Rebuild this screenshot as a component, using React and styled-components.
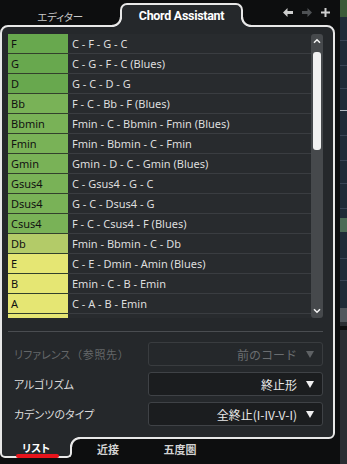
import React from "react";
import styled, { createGlobalStyle } from "styled-components";

const BG = "#0d0e0f";
const PANEL = "#25282b";
const CELL = "#282b2e";
const EDGE = "#e8e8e8";

const GlobalStyle = createGlobalStyle`
  html, body { margin: 0; padding: 0; background: ${BG}; }
  body { font-family: "Noto Sans", "Noto Sans CJK JP", sans-serif; }
  * { box-sizing: border-box; }
`;

const Screen = styled.div`
  display: flex;
  width: 347px;
  height: 464px;
  overflow: hidden;
  background: ${BG};
`;

const Main = styled.div`
  width: 335px;
  flex-shrink: 0;
  display: flex;
  flex-direction: column;
`;

const TopBar = styled.div`
  position: relative;
  z-index: 2;
  height: 25px;
  display: flex;
  align-items: flex-start;
`;

const InactiveTopTab = styled.div`
  width: 120px;
  height: 25px;
  padding-top: 7px;
  display: flex;
  align-items: center;
  justify-content: center;
  color: #c9c9c9;
  font-family: "Noto Sans CJK JP", sans-serif;
  font-feature-settings: "palt";
  font-size: 10.5px;
  letter-spacing: -0.2px;
`;

const corner = (side) => `
  content: "";
  position: absolute;
  bottom: 0;
  ${side}: -10px;
  width: 10px;
  height: 10px;
  background: radial-gradient(circle at ${side === "left" ? "0 0" : "100% 0"},
    ${BG} 7.3px, ${EDGE} 8.2px, ${EDGE} 9.6px, ${PANEL} 10.4px);
`;

const ActiveTopTab = styled.div`
  position: relative;
  margin-top: 3px;
  width: 123px;
  height: 24px;
  border: 2px solid ${EDGE};
  border-bottom: none;
  border-radius: 7px 7px 0 0;
  background: ${PANEL};
  display: flex;
  align-items: center;
  justify-content: center;
  padding-bottom: 2px;
  color: #ffffff;
  font-family: Roboto, "Noto Sans", sans-serif;
  font-weight: 700;
  font-size: 12.5px;
  letter-spacing: -0.3px;
  &::before { ${corner("left")} }
  &::after { ${corner("right")} }
`;

const TopIcons = styled.div`
  margin-left: auto;
  height: 25px;
  padding-right: 5px;
  display: flex;
  align-items: center;
  gap: 9px;
`;

const Panel = styled.div`
  height: 414px;
  border: 2px solid ${EDGE};
  border-radius: 8px 8px 6px 0;
  background: ${PANEL};
  padding: 7px 10px 11px 6px;
  display: flex;
  flex-direction: column;
`;

const List = styled.div`
  height: 284px;
  flex-shrink: 0;
  display: flex;
`;

const Rows = styled.div`
  flex: 1;
  overflow: hidden;
  display: flex;
  flex-direction: column;
`;

const Row = styled.div`
  display: grid;
  grid-template-columns: 60px 1fr;
  height: 20px;
  flex-shrink: 0;
  font-size: 11px;
  font-family: "Noto Sans", sans-serif;
`;

const ChordCell = styled.div`
  background: ${(p) => p.$color};
  color: #111;
  padding-left: 3px;
  display: flex;
  align-items: center;
  border-bottom: 1px solid #32402c;
`;

const ProgCell = styled.div`
  background: ${CELL};
  color: #dedede;
  padding-left: 4px;
  display: flex;
  align-items: center;
  white-space: nowrap;
  border-bottom: 1px solid #3a3d41;
`;

const Scrollbar = styled.div`
  width: 12px;
  flex-shrink: 0;
  background: #46494c;
  border-radius: 3px;
  display: flex;
  flex-direction: column;
  align-items: center;
`;

const ScrollArrow = styled.div`
  height: 14px;
  display: flex;
  align-items: center;
  justify-content: center;
`;

const ScrollTrack = styled.div`
  flex: 1;
  width: 100%;
  padding-top: 4px;
  display: flex;
  justify-content: center;
`;

const Thumb = styled.div`
  width: 8px;
  height: 98px;
  background: #f1f1f1;
  border-radius: 3px;
`;

const Divider = styled.div`
  height: 1px;
  flex-shrink: 0;
  margin-top: 13px;
  background: #4a4d51;
`;

const Settings = styled.div`
  margin-top: 10px;
  display: grid;
  grid-template-columns: 140px 175px;
  grid-auto-rows: 24px;
  row-gap: 6px;
`;

const Label = styled.div`
  padding-left: 6px;
  display: flex;
  align-items: center;
  white-space: nowrap;
  font-family: "Noto Sans CJK JP", sans-serif;
  font-feature-settings: "palt";
  font-size: 11px;
  color: ${(p) => (p.$disabled ? "#646769" : "#dadada")};
`;

const FullWidth = styled.span`
  font-feature-settings: "palt" 0;
  margin-left: 1px;
  letter-spacing: 0.6px;
`;

const Select = styled.div`
  border: 1px solid ${(p) => (p.$disabled ? "#393c3f" : "#3f4246")};
  background: ${(p) => (p.$disabled ? "transparent" : "#1b1d1f")};
  border-radius: 3px;
  display: flex;
  align-items: center;
  justify-content: flex-end;
  gap: 9px;
  padding-right: 8px;
  font-family: "Noto Sans CJK JP", sans-serif;
  font-size: 12px;
  color: ${(p) => (p.$disabled ? "#6a6d70" : "#e8e8e8")};
`;

const BottomTabs = styled.div`
  height: 19px;
  display: flex;
  font-family: "Noto Sans CJK JP", sans-serif;
  font-feature-settings: "palt";
  font-weight: 700;
  font-size: 11px;
`;

const ActiveBottomTab = styled.div`
  position: relative;
  width: 72px;
  height: 21px;
  margin-top: -2px;
  padding-top: 2px;
  border: 2px solid ${EDGE};
  border-top: none;
  border-radius: 0 0 5px 5px;
  background: ${PANEL};
  display: flex;
  align-items: center;
  justify-content: center;
  color: #ffffff;
  font-size: 10.5px;
  &::before {
    content: "";
    position: absolute;
    top: 0;
    right: -10px;
    width: 10px;
    height: 10px;
    background: radial-gradient(circle at 100% 100%,
      ${BG} 7.3px, ${EDGE} 8.2px, ${EDGE} 9.6px, ${PANEL} 10.4px);
  }
`;

const Underline = styled.span`
  position: absolute;
  left: 14px;
  bottom: -2px;
  width: 43px;
  height: 4px;
  border-radius: 2px;
  background: #e8141c;
`;

const BottomTab = styled.div`
  width: 72px;
  display: flex;
  align-items: center;
  justify-content: center;
  color: #d2d2d2;
`;

const Gap = styled.div`
  width: 5px;
  flex-shrink: 0;
  background: ${BG};
`;

const Strip = styled.div`
  width: 7px;
  flex-shrink: 0;
  display: flex;
  flex-direction: column;
`;

const StripSeg = styled.div`
  height: ${(p) => p.$h}px;
  flex-shrink: 0;
  background: ${(p) => p.$c};
`;

const G1 = "#68a84e";
const G2 = "#79b257";
const YG = "#b3cb68";
const Y = "#e5e673";

const chords = [
  ["F", "C - F - G - C", G1],
  ["G", "C - G - F - C (Blues)", G1],
  ["D", "G - C - D - G", G1],
  ["Bb", "F - C - Bb - F (Blues)", G2],
  ["Bbmin", "Fmin - C - Bbmin - Fmin (Blues)", G2],
  ["Fmin", "Fmin - Bbmin - C - Fmin", G2],
  ["Gmin", "Gmin - D - C - Gmin (Blues)", G2],
  ["Gsus4", "C - Gsus4 - G - C", G2],
  ["Dsus4", "G - C - Dsus4 - G", G2],
  ["Csus4", "F - C - Csus4 - F (Blues)", G2],
  ["Db", "Fmin - Bbmin - C - Db", YG],
  ["E", "C - E - Dmin - Amin (Blues)", Y],
  ["B", "Emin - C - B - Emin", Y],
  ["A", "C - A - B - Emin", Y],
  ["", "", Y],
];

const D = "#1f2b37";
const L = "#394555";
const strip = [
  [17, "#3b5a38"], [23, D], [1, L], [24, D], [1, L], [22, D], [1, L], [21, D],
  [1, "#b0b8c0"], [24, D], [1, L], [24, D], [1, L], [22, D], [1, L], [24, D],
  [1, L], [9, D], [14, "#4b6b56"], [26, D], [1, L], [21, D], [1, L], [27, D],
  [14, "#50565c"], [4, "#2a2e33"], [4, BG], [134, "#2a2e33"],
];

const Chevron = ({ up }) => (
  <svg width="8" height="6" viewBox="0 0 8 6">
    <polyline
      points={up ? "1,4.8 4,1.8 7,4.8" : "1,1.2 4,4.2 7,1.2"}
      fill="none"
      stroke="#f4f4f4"
      strokeWidth="1.5"
    />
  </svg>
);

const Arrow = ({ dir, color }) => (
  <svg width="10" height="9" viewBox="0 0 10 9">
    <path
      d="M0 4.5 L4.5 0 L4.5 3 L10 3 L10 6 L4.5 6 L4.5 9 Z"
      fill={color}
      transform={dir === "right" ? "translate(10 0) scale(-1 1)" : undefined}
    />
  </svg>
);

const Plus = () => (
  <svg width="9" height="9" viewBox="0 0 9 9">
    <path d="M3.5 0h2v3.5H9v2H5.5V9h-2V5.5H0v-2h3.5z" fill="#cfcfcf" />
  </svg>
);

const Tri = ({ color }) => (
  <svg width="8" height="7" viewBox="0 0 8 7">
    <polygon points="0,0 8,0 4,7" fill={color} />
  </svg>
);

const settings = [
  [
    <>
      リファレンス<FullWidth>（参照先）</FullWidth>
    </>,
    "前のコード",
    true,
  ],
  ["アルゴリズム", "終止形", false],
  ["カデンツのタイプ", "全終止(I-IV-V-I)", false],
];

export default function App() {
  return (
    <>
      <GlobalStyle />
      <Screen>
        <Main>
          <TopBar>
            <InactiveTopTab>エディター</InactiveTopTab>
            <ActiveTopTab>Chord Assistant</ActiveTopTab>
            <TopIcons>
              <Arrow dir="left" color="#cdcdcd" />
              <Arrow dir="right" color="#4e5154" />
              <Plus />
            </TopIcons>
          </TopBar>
          <Panel>
            <List>
              <Rows>
                {chords.map(([c, p, col], i) => (
                  <Row key={i}>
                    <ChordCell $color={col}>{c}</ChordCell>
                    <ProgCell>{p}</ProgCell>
                  </Row>
                ))}
              </Rows>
              <Scrollbar>
                <ScrollArrow>
                  <Chevron up />
                </ScrollArrow>
                <ScrollTrack>
                  <Thumb />
                </ScrollTrack>
                <ScrollArrow>
                  <Chevron />
                </ScrollArrow>
              </Scrollbar>
            </List>
            <Divider />
            <Settings>
              {settings.map(([l, v, dis], i) => (
                <React.Fragment key={i}>
                  <Label $disabled={dis}>{l}</Label>
                  <Select $disabled={dis}>
                    <span>{v}</span>
                    <Tri color={dis ? "#5e6164" : "#f0f0f0"} />
                  </Select>
                </React.Fragment>
              ))}
            </Settings>
          </Panel>
          <BottomTabs>
            <ActiveBottomTab>
              リスト
              <Underline />
            </ActiveBottomTab>
            <BottomTab>近接</BottomTab>
            <BottomTab>五度圏</BottomTab>
          </BottomTabs>
        </Main>
        <Gap />
        <Strip>
          {strip.map(([h, c], i) => (
            <StripSeg key={i} $h={h} $c={c} />
          ))}
        </Strip>
      </Screen>
    </>
  );
}
